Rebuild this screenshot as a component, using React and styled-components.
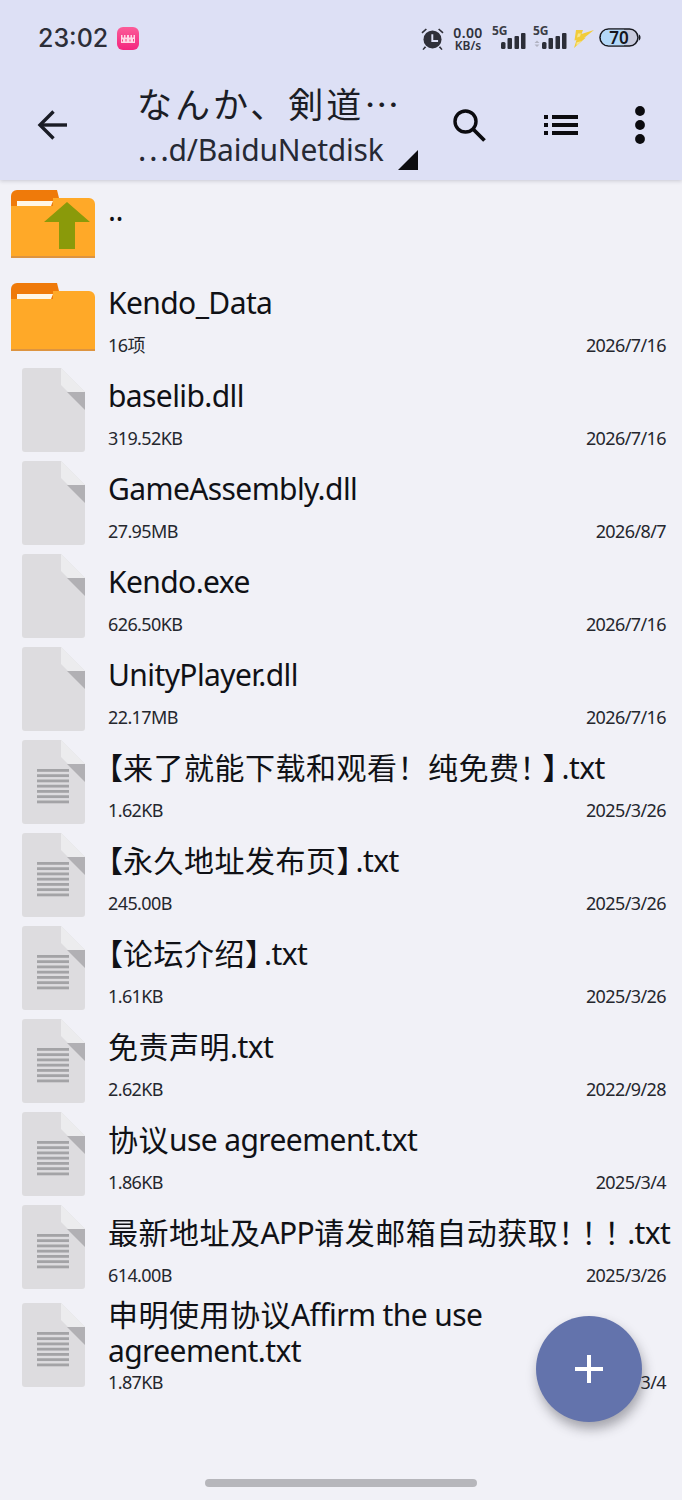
import React from "react";
import styled, { createGlobalStyle } from "styled-components";

const Global = createGlobalStyle`
  html, body { margin: 0; padding: 0; background: #f1f1f7; }
  * { box-sizing: border-box; }
`;

const FONT = `"Noto Sans", "Noto Sans CJK SC", sans-serif`;

const Screen = styled.div`
  position: relative;
  width: 682px;
  height: 1500px;
  overflow: hidden;
  background: #f1f1f7;
  font-family: ${FONT};
  color: #16181f;
  display: flex;
  flex-direction: column;
`;

const Header = styled.header`
  height: 180px;
  background: #dde0f5;
  box-shadow: 0 1px 4px rgba(60, 60, 80, 0.22);
  position: relative;
  z-index: 1;
  flex: none;
`;

const StatusBar = styled.div`
  height: 76px;
  padding: 24px 40px 0 38px;
  display: flex;
  align-items: flex-start;
  justify-content: space-between;
`;

const StatusLeft = styled.div`
  display: flex;
  align-items: center;
  gap: 9px;
`;

const Clock = styled.span`
  font-family: Inter, sans-serif;
  font-size: 25px;
  line-height: 28px;
  font-weight: 500;
  color: #2c2e38;
`;

const StatusRight = styled.div`
  display: flex;
  align-items: flex-start;
`;

const StatusItem = styled.div`
  display: flex;
  margin-top: ${(p) => p.$top || 0}px;
  margin-left: ${(p) => p.$left || 0}px;
`;

const Speed = styled.div`
  width: 36px;
  margin-left: 5px;
  margin-top: 2px;
  font-family: "Noto Sans", sans-serif;
  font-weight: 600;
  color: #30323c;
  text-align: center;
  font-size: 14px;
  line-height: 13px;
  letter-spacing: 0.4px;
  & small { display: block; font-size: 12px; line-height: 12px; letter-spacing: 0; margin-top: 1px; }
`;

const Toolbar = styled.div`
  height: 104px;
  display: flex;
  align-items: flex-start;
`;

const BackSlot = styled.div`
  width: 137px;
  padding: 33px 0 0 35px;
  flex: none;
`;

const Titles = styled.div`
  width: 290px;
  flex: none;
  position: relative;
`;

const Title = styled.div`
  font-size: 35px;
  line-height: 44px;
  height: 44px;
  margin-top: 7px;
  letter-spacing: 3px;
  white-space: nowrap;
  color: #1b1d25;
`;

const Subtitle = styled.div`
  font-size: 30px;
  line-height: 38px;
  margin-top: 4px;
  letter-spacing: -0.2px;
  white-space: nowrap;
  color: #262934;
`;

const Corner = styled.svg`
  position: absolute;
  left: 261px;
  top: 74px;
`;

const Actions = styled.div`
  display: flex;
  align-items: center;
  height: 98px;
`;

const ActionSlot = styled.div`
  width: ${(p) => p.$w}px;
  display: flex;
  justify-content: center;
`;

const List = styled.main`
  flex: 1;
  display: flex;
  flex-direction: column;
`;

const Row = styled.div`
  min-height: 93px;
  display: flex;
  padding-right: 16px;
`;

const IconCell = styled.div`
  width: 108px;
  flex: none;
  padding: ${(p) => (p.$folder ? "10px 0 0 11px" : "2px 0 0 22px")};
  margin-top: ${(p) => (p.$tall ? "5px" : "0")};
`;

const Body = styled.div`
  flex: 1;
  min-width: 0;
  position: relative;
`;

const Name = styled.div`
  font-size: 30px;
  line-height: 36px;
  padding-top: ${(p) => (p.$tall ? "1px" : "12px")};
  letter-spacing: -0.6px;
  color: #101116;
  white-space: ${(p) => (p.$tall ? "normal" : "nowrap")};
  width: ${(p) => (p.$tall ? "420px" : "auto")};
`;

/* Han runs sit slightly wider than the Latin text around them */
const Han = styled.span`
  letter-spacing: 0.5px;
`;

/* Brackets and closing marks use the font's half-width alternates */
const Bracket = styled.span`
  font-feature-settings: "halt";
  letter-spacing: 0;
  margin-right: ${(p) => (p.$closing ? "4px" : "0")};
`;

const TightBang = styled.span`
  font-feature-settings: "halt";
  letter-spacing: 0;
  margin-right: 8px;
`;

const Meta = styled.div`
  display: flex;
  justify-content: space-between;
  font-size: 18px;
  line-height: 24px;
  letter-spacing: -0.6px;
  margin-top: ${(p) => (p.$tall ? "1px" : "12px")};
  color: #25272e;
`;

const Fab = styled.button`
  position: absolute;
  left: 536px;
  top: 1316px;
  width: 106px;
  height: 106px;
  border: 0;
  border-radius: 50%;
  background: #6373ac;
  box-shadow: 2px 7px 12px rgba(40, 40, 50, 0.38);
  display: flex;
  align-items: center;
  justify-content: center;
  padding: 0;
`;

const HomeBar = styled.div`
  position: absolute;
  left: 205px;
  top: 1479px;
  width: 272px;
  height: 8px;
  border-radius: 4px;
  background: #b6b6bb;
`;

const AppBadge = () => (
  <svg width="22" height="23" viewBox="0 0 22 23">
    <defs>
      <linearGradient id="badge" x1="0" y1="0" x2="0" y2="1">
        <stop offset="0" stopColor="#fb5c98" />
        <stop offset="1" stopColor="#f4257f" />
      </linearGradient>
    </defs>
    <rect width="22" height="23" rx="6" fill="url(#badge)" />
    <path d="M4 16V8h1.500v2.500H7V8h1.500v2.500H10V8h2v2.500h1.500V8H15v2.500h1.500V8H18v8z" fill="#ffd6e6" />
    <path d="M5.500 12.500v2M9 12v2.500M13 12.500v2M16.500 12v2.500" stroke="#f4457f" strokeWidth="1" />
  </svg>
);

const Alarm = () => (
  <svg width="25" height="24" viewBox="0 0 26 25" fill="#2f3039">
    <circle cx="13" cy="13" r="9.400" />
    <path d="M11.800 7.500h2v6h5v2h-7z" fill="#dde0f5" />
    <path d="M1.500 5.500 6 1.500l1.200 1.200L2.600 6.700zM24.500 5.500 20 1.500l-1.200 1.200 4.600 4z" />
    <path d="M5 20l-2.500 3.200 1.200.8 2.800-3zM21 20l2.500 3.200-1.200.8-2.800-3z" />
  </svg>
);

const Signal = ({ arrows }) => (
  <svg width="34" height="26" viewBox="0 0 34 26" overflow="visible">
    <text x="0" y="11" fontFamily="'Noto Sans', sans-serif" fontWeight="700" fontSize="12" fill="#3a3c46">5G</text>
    {arrows && <path d="M1.500 19l2.500-2.600 2.500 2.600zM1.500 20.500l2.500 2.600 2.500-2.600z" fill="#b2b3c2" />}
    <rect x="9" y="18" width="4.500" height="7" rx="1.500" fill="#2c2e38" />
    <rect x="15.500" y="14" width="4.500" height="11" rx="1" fill="#2c2e38" />
    <rect x="22.500" y="12" width="4.500" height="13" rx="1" fill="#2c2e38" />
    <rect x="29" y="9" width="4.500" height="16" rx="1" fill="#2c2e38" />
  </svg>
);

const Bolt = () => (
  <svg width="22" height="20" viewBox="0 0 22 20">
    <path d="M3 1h7L8.500 5 21 1 11 9l2-.5L1 19l2.500-8-2 .5z" fill="#f2cc3a" />
    <path d="M3.500 13.500l5-1.500-5 5zM5 4.500h3l-1 3-3 1z" fill="#f8e58f" />
  </svg>
);

const Battery = () => (
  <svg width="43" height="20" viewBox="0 0 43 20" overflow="visible">
    <rect x="1" y="1" width="38" height="17" rx="8.500" fill="#c9cbdd" stroke="#16181f" strokeWidth="1.600" />
    <path d="M9.500 1.800H25v15.400H9.500a7.700 7.700 0 0 1 0-15.400z" fill="#b3d8f8" />
    <path d="M40 6.500c2 1 2 5 0 6z" fill="#16181f" />
    <text x="20" y="15.500" textAnchor="middle" fontFamily="'Noto Sans', sans-serif" fontWeight="600" fontSize="17" fill="#14161d">70</text>
  </svg>
);

const BackIcon = () => (
  <svg width="32" height="32" viewBox="0 0 32 32" fill="none" stroke="#1a1c25" strokeWidth="3.400">
    <path d="M33 16H5" />
    <path d="M18.500 2.500 5 16l13.500 13.500" />
  </svg>
);

const SearchIcon = () => (
  <svg width="33" height="33" viewBox="0 0 33 33" fill="none" stroke="#0b0b0f" strokeWidth="3.400">
    <circle cx="12.500" cy="12.500" r="10.500" />
    <path d="M20 20 31.500 31.500" strokeWidth="3.800" />
  </svg>
);

const ListIcon = () => (
  <svg width="34" height="20" viewBox="0 0 34 20" fill="#0b0b0f">
    <rect x="0" y="0" width="4" height="4" />
    <rect x="8" y="0" width="26" height="4" />
    <rect x="0" y="8" width="4" height="4" />
    <rect x="8" y="8" width="26" height="4" />
    <rect x="0" y="16" width="4" height="4" />
    <rect x="8" y="16" width="26" height="4" />
  </svg>
);

const DotsIcon = () => (
  <svg width="10" height="38" viewBox="0 0 10 38" fill="#0b0b0f">
    <circle cx="5" cy="5" r="4.900" />
    <circle cx="5" cy="19" r="4.900" />
    <circle cx="5" cy="33" r="4.900" />
  </svg>
);

const Folder = ({ up }) => (
  <svg width="84" height="68" viewBox="0 0 84 68">
    <path d="M0 6a6 6 0 0 1 6-6h40l2 8v8H0z" fill="#ef7a0a" />
    <path d="M42 8h36a6 6 0 0 1 6 6v54H0V16h42z" fill="#ffa928" />
    <path d="M6 11h36l-2 5H6z" fill="#fff6e6" />
    <rect x="0" y="66" width="84" height="2" fill="#dd9440" />
    {up && <path d="M56 12 79 32H64V59H48V32H33z" fill="#8a9a0a" />}
  </svg>
);

const FileIcon = ({ text }) => (
  <svg width="63" height="84" viewBox="0 0 63 84">
    <path d="M3 0h36l24 24v57a3 3 0 0 1-3 3H3a3 3 0 0 1-3-3V3a3 3 0 0 1 3-3z" fill="#dddcdf" />
    <path d="M39 0l24 24H46l-7-7z" fill="#ececee" />
    <path d="M45 24h18v18z" fill="#b1b0b4" />
    {text && (
      <g fill="#a3a3a6">
        {[0, 1, 2, 3, 4, 5, 6].map((i) => (
          <rect key={i} x="15" y={29 + i * 5.25} width="32" height="2.800" />
        ))}
      </g>
    )}
  </svg>
);

const TOKEN = /【|】|！|[\u4e00-\u9fff]+|[^【】！\u4e00-\u9fff\s]+\s*/g;

/* Splits a file name into runs so brackets, marks and Han get their own spacing */
const FileName = ({ text }) => {
  const tokens = text.match(TOKEN);
  return tokens.map((t, i) => {
    const next = tokens[i + 1] ? tokens[i + 1][0] : "";
    if (t === "【") return <Bracket key={i}>{t}</Bracket>;
    if (t === "】") return <Bracket key={i} $closing>{t}</Bracket>;
    if (t === "！") {
      return next && "！.】".includes(next) ? <TightBang key={i}>{t}</TightBang> : <Han key={i}>{t}</Han>;
    }
    if (/[\u4e00-\u9fff]/.test(t)) return <Han key={i}>{t}</Han>;
    return <span key={i}>{t}</span>;
  });
};

const FILES = [
  { name: "..", kind: "up" },
  { name: "Kendo_Data", kind: "folder", info: "16项", date: "2026/7/16" },
  { name: "baselib.dll", kind: "file", info: "319.52KB", date: "2026/7/16" },
  { name: "GameAssembly.dll", kind: "file", info: "27.95MB", date: "2026/8/7" },
  { name: "Kendo.exe", kind: "file", info: "626.50KB", date: "2026/7/16" },
  { name: "UnityPlayer.dll", kind: "file", info: "22.17MB", date: "2026/7/16" },
  { name: "【来了就能下载和观看！纯免费！】.txt", kind: "text", info: "1.62KB", date: "2025/3/26" },
  { name: "【永久地址发布页】.txt", kind: "text", info: "245.00B", date: "2025/3/26" },
  { name: "【论坛介绍】.txt", kind: "text", info: "1.61KB", date: "2025/3/26" },
  { name: "免责声明.txt", kind: "text", info: "2.62KB", date: "2022/9/28" },
  { name: "协议use agreement.txt", kind: "text", info: "1.86KB", date: "2025/3/4" },
  { name: "最新地址及APP请发邮箱自动获取！！！.txt", kind: "text", info: "614.00B", date: "2025/3/26" },
  { name: "申明使用协议Affirm the use agreement.txt", kind: "text", info: "1.87KB", date: "2025/3/4", tall: true },
];

const FileRow = ({ file }) => {
  const isFolder = file.kind === "up" || file.kind === "folder";
  return (
    <Row>
      <IconCell $folder={isFolder} $tall={file.tall}>
        {isFolder ? <Folder up={file.kind === "up"} /> : <FileIcon text={file.kind === "text"} />}
      </IconCell>
      <Body>
        <Name $tall={file.tall}><FileName text={file.name} /></Name>
        {file.info && (
          <Meta $tall={file.tall}>
            <span>{file.info}</span>
            <span>{file.date}</span>
          </Meta>
        )}
      </Body>
    </Row>
  );
};

export default function App() {
  return (
    <Screen>
      <Global />
      <Header>
        <StatusBar>
          <StatusLeft>
            <Clock>23:02</Clock>
            <AppBadge />
          </StatusLeft>
          <StatusRight>
            <StatusItem $top={3}><Alarm /></StatusItem>
            <Speed>0.00<small>KB/s</small></Speed>
            <StatusItem $left={6}><Signal /></StatusItem>
            <StatusItem $left={7}><Signal arrows /></StatusItem>
            <StatusItem $left={6} $top={5}><Bolt /></StatusItem>
            <StatusItem $left={4} $top={4}><Battery /></StatusItem>
          </StatusRight>
        </StatusBar>
        <Toolbar>
          <BackSlot><BackIcon /></BackSlot>
          <Titles>
            <Title>なんか、剣道⋯</Title>
            <Subtitle>⋯d/BaiduNetdisk</Subtitle>
            <Corner width="20" height="20" viewBox="0 0 20 20"><path d="M20 0v20H0z" fill="#0c0c10" /></Corner>
          </Titles>
          <Actions>
            <ActionSlot $w={84}><SearchIcon /></ActionSlot>
            <ActionSlot $w={100}><ListIcon /></ActionSlot>
            <ActionSlot $w={58}><DotsIcon /></ActionSlot>
          </Actions>
        </Toolbar>
      </Header>
      <List>
        {FILES.map((f) => <FileRow key={f.name} file={f} />)}
      </List>
      <Fab aria-label="add">
        <svg width="28" height="28" viewBox="0 0 28 28" fill="#fff">
          <rect x="12" y="0" width="4" height="28" />
          <rect x="0" y="12" width="28" height="4" />
        </svg>
      </Fab>
      <HomeBar />
    </Screen>
  );
}
